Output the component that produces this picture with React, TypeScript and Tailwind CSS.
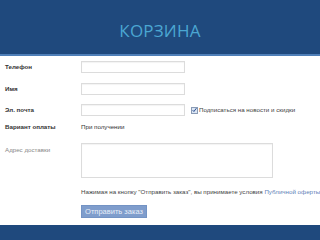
import React from "react";

export default function App() {
  const sans = { fontFamily: '"Liberation Sans", Arial, sans-serif' };
  return (
    <div className="w-[320px] h-[240px] overflow-hidden bg-white flex flex-col" style={sans}>
      <div className="h-[56px] shrink-0 bg-[#1f497d] border-b-2 border-[#4f7fb8] flex items-center justify-center pt-[7px]">
        <span
          className="text-[17px] leading-none text-[#4ba6d2] tracking-[0.2px]"
          style={{ fontFamily: '"Open Sans", sans-serif' }}
        >
          КОРЗИНА
        </span>
      </div>
      <div className="flex-1 flex flex-col text-[6.2px] leading-[8px] text-[#333]">
        <div className="mt-[5px] flex items-center">
          <div className="w-[81px] pl-[5px] font-bold">Телефон</div>
          <div className="w-[104px] h-[12px] border border-[#dcdcdc] bg-white shadow-[inset_0_1px_1px_rgba(0,0,0,0.05)]" />
        </div>
        <div className="mt-[10px] flex items-center">
          <div className="w-[81px] pl-[5px] font-bold">Имя</div>
          <div className="w-[104px] h-[12px] border border-[#dcdcdc] bg-white shadow-[inset_0_1px_1px_rgba(0,0,0,0.05)]" />
        </div>
        <div className="mt-[9px] flex items-center">
          <div className="w-[81px] pl-[5px] font-bold">Эл. почта</div>
          <div className="w-[104px] h-[12px] border border-[#dcdcdc] bg-white shadow-[inset_0_1px_1px_rgba(0,0,0,0.05)]" />
          <div className="ml-[6px] w-[7px] h-[7px] border border-[#8a9bb5] bg-[#dce6f4] flex items-center justify-center">
            <svg width="6" height="6" viewBox="0 0 6 6">
              <path d="M0.8 3.2 L2.3 4.8 L5.3 0.8" stroke="#2a4f8f" strokeWidth="1.2" fill="none" />
            </svg>
          </div>
          <span className="ml-[1px] text-[#444]">Подписаться на новости и скидки</span>
        </div>
        <div className="mt-[7px] flex items-center">
          <div className="w-[81px] pl-[5px] font-bold">Вариант оплаты</div>
          <div>При получении</div>
        </div>
        <div className="mt-[12px] flex items-start">
          <div className="w-[81px] pl-[5px] pt-[3px] text-[#888]">Адрес доставки</div>
          <div className="w-[192px] h-[35px] border border-[#dcdcdc] bg-white shadow-[inset_0_1px_1px_rgba(0,0,0,0.05)]" />
        </div>
        <div className="mt-[10px] pl-[81px] whitespace-nowrap text-[#444]">
          Нажимая на кнопку "Отправить заказ", вы принимаете условия{" "}
          <span className="text-[#5f82b8]">Публичной оферты</span>
        </div>
        <div className="mt-[9px] pl-[81px]">
          <div className="w-[66px] h-[13px] bg-[#7f9dcc] border border-[#7393c4] text-[#e8eef8] text-[7.5px] leading-none flex items-center justify-center">
            Отправить заказ
          </div>
        </div>
      </div>
      <div className="h-[15px] shrink-0 bg-[#1f497d]" />
    </div>
  );
}
